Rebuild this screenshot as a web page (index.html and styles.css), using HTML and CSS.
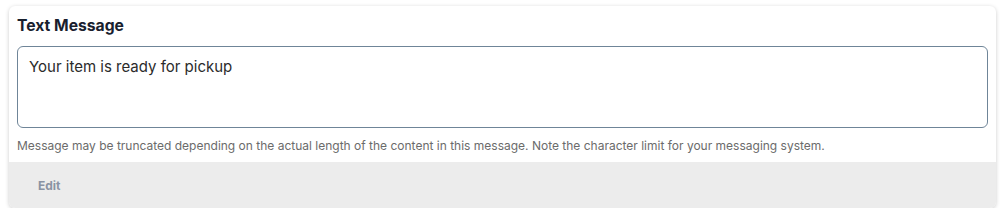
FILE: index.html
```html
<!DOCTYPE html>
<html lang="en">
<head>
  <meta charset="UTF-8">
  <title>Text Message</title>
  <link rel="stylesheet" href="styles.css">
</head>
<body>

  <div class="card">
    <div class="card-body">
      <h3 class="card-title">Text Message</h3>
      <textarea class="message" rows="3">Your item is ready for pickup</textarea>
      <p class="hint">Message may be truncated depending on the actual length of the content in this message. Note the character limit for your messaging system.</p>
    </div>
    <div class="card-footer">
      <button class="edit-btn">Edit</button>
    </div>
  </div>

</body>
</html>
```

FILE: styles.css
```css
body {
  font-family: Inter, 'Noto Sans', sans-serif;
  margin: 0;
  padding: 6px 8px 0 9px;
  background-color: #fff;
}

.card {
  background: #fff;
  border-radius: 6px;
  box-shadow: 0 1px 4px rgba(0,0,0,0.2);
  overflow: hidden;
}

.card-body {
  padding: 10px 8px 8px 8px;
}

.card-title {
  margin: 0 0 10px 0;
  font-size: 15.7px;
  line-height: 20px;
  font-weight: 700;
  color: #18202e;
}

.message {
  display: block;
  box-sizing: border-box;
  width: 100%;
  height: 82px;
  padding: 10px 11px;
  border: 1px solid #6f8598;
  border-radius: 6px;
  font-family: inherit;
  font-size: 15px;
  line-height: 20px;
  color: #2b2b2b;
  resize: none;
  outline: none;
}

.hint {
  margin: 10px 0 0 0;
  font-size: 12px;
  line-height: 16px;
  color: #6b6b6b;
}

.card-footer {
  background-color: #ececec;
  height: 46px;
  display: flex;
  align-items: center;
  padding-left: 21px;
}

.edit-btn {
  background: none;
  border: none;
  padding: 0 8px;
  font-family: inherit;
  font-size: 12px;
  font-weight: 700;
  color: #8a93a3;
  cursor: pointer;
}
```
